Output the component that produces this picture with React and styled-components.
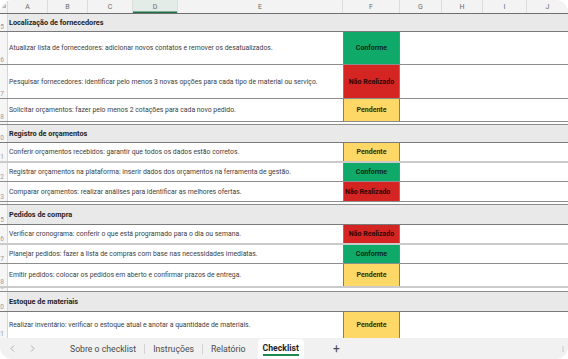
import React from "react";
import styled, { createGlobalStyle } from "styled-components";

const GlobalStyle = createGlobalStyle`
  html, body { margin: 0; padding: 0; background: #ffffff; }
  * { box-sizing: border-box; }
`;

const Frame = styled.div`
  width: 568px;
  height: 359px;
  border-radius: 12px;
  overflow: hidden;
  display: flex;
  flex-direction: column;
  background: #ffffff;
  font-family: Roboto, "Liberation Sans", sans-serif;
`;

const Sheet = styled.div`
  flex: 1;
  display: flex;
  flex-direction: column;
  overflow: hidden;
`;

const HeaderRow = styled.div`
  display: grid;
  grid-template-columns: 8px 40px 40px 45px 45px 165px 57px 42px 41px 44px 1fr;
  height: 14px;
  flex: none;
  background: #f3f3f3;
  border-bottom: 1px solid #6f6f6f;
`;

const Corner = styled.div`
  position: relative;
  border-right: 1px solid #dadada;
`;

const CornerMark = styled.svg`
  position: absolute;
  left: 2px;
  top: 4px;
`;

const ColHead = styled.div`
  display: flex;
  align-items: center;
  justify-content: center;
  font-size: 7px;
  color: #6a6a6a;
  border-right: 1px solid #dcdcdc;
  background: ${(p) => (p.$selected ? "#e3ece6" : "transparent")};
  box-shadow: ${(p) => (p.$selected ? "inset 0 -1.5px 0 #1e7145" : "none")};
  &:last-child { border-right: none; }
`;

const lineStyles = {
  dark: "1px solid #8d8d8d",
  light: "2px solid #cacaca",
  section: "1px solid #7a7a7a",
  none: "none",
};

const Row = styled.div`
  display: grid;
  grid-template-columns: 8px 335px 57px 1fr;
  height: ${(p) => p.$h}px;
  flex: none;
  border-bottom: ${(p) => lineStyles[p.$line || "dark"]};
  background: ${(p) => (p.$section ? "#e9e9e9" : "#ffffff")};
`;

const Spacer = styled.div`
  height: ${(p) => p.$h}px;
  flex: none;
  border-bottom: 1px solid #8d8d8d;
  background: #ffffff;
  display: grid;
  grid-template-columns: 8px 1fr;
  overflow: hidden;
`;

const RowNum = styled.div`
  display: flex;
  align-items: flex-end;
  justify-content: flex-end;
  padding-right: 3px;
  padding-bottom: 1px;
  overflow: hidden;
  font-size: 6.5px;
  line-height: 1;
  color: #9a9a9a;
  background: #f6f6f6;
  border-right: 1px solid #d6d6d6;
  white-space: nowrap;
`;

const TaskText = styled.div`
  display: flex;
  align-items: center;
  padding-left: 1px;
  font-size: 6.85px;
  color: #3c3c3c;
  white-space: nowrap;
  overflow: visible;
`;

const SectionTitle = styled.div`
  grid-column: 2 / -1;
  display: flex;
  align-items: center;
  padding-left: 1px;
  font-size: 7.3px;
  font-weight: 700;
  color: #1d1d1d;
  white-space: nowrap;
`;

const statusColors = {
  ok: { bg: "#0fa96a", fg: "#082a18", label: "Conforme" },
  no: { bg: "#d52523", fg: "#2c0505", label: "Não Realizado" },
  wait: { bg: "#fdd866", fg: "#3a2c00", label: "Pendente" },
};

const Status = styled.div`
  display: flex;
  align-items: center;
  justify-content: ${(p) => (p.$left ? "flex-start" : "center")};
  padding-left: ${(p) => (p.$left ? "1px" : "0")};
  font-size: 7px;
  font-weight: 700;
  white-space: nowrap;
  background: ${(p) => statusColors[p.$kind].bg};
  color: ${(p) => statusColors[p.$kind].fg};
  border-left: 1px solid #7d7d7d;
  border-right: 1px solid #7d7d7d;
`;

const Empty = styled.div``;

const TabBar = styled.div`
  height: 21px;
  flex: none;
  display: flex;
  align-items: stretch;
  background: #f1f1f1;
  font-family: Roboto, "Liberation Sans", sans-serif;
  position: relative;
`;

const NavArrows = styled.div`
  width: 62px;
  display: flex;
  align-items: center;
  gap: 15px;
  padding-left: 10px;
`;

const Tab = styled.div`
  display: flex;
  align-items: center;
  padding: 0 ${(p) => p.$pad || 8}px;
  margin-left: ${(p) => p.$gap || 0}px;
  font-size: 8.7px;
  color: ${(p) => (p.$active ? "#1f1f1f" : "#4a4a4a")};
  font-weight: ${(p) => (p.$active ? 700 : 400)};
  background: ${(p) => (p.$active ? "#ffffff" : "transparent")};
  border-radius: ${(p) => (p.$active ? "4px 4px 0 0" : "0")};
  margin-top: ${(p) => (p.$active ? "1px" : "0")};
  position: relative;
  white-space: nowrap;
`;

const TabLabel = styled.span`
  position: relative;
  padding-bottom: 1px;
  border-bottom: ${(p) => (p.$active ? "2px solid #1e8a4c" : "2px solid transparent")};
`;

const TabSep = styled.div`
  width: 1px;
  align-self: center;
  height: 10px;
  background: #d2d2d2;
`;

const AddTab = styled.div`
  display: flex;
  align-items: center;
  padding-left: 29px;
  font-size: 12px;
  color: #4a4a4a;
`;

const Grip = styled.svg`
  position: absolute;
  right: 4px;
  top: 8px;
`;

const rowsData = [
  { type: "section", n: 5, h: 18, title: "Localização de fornecedores", line: "section" },
  { n: 6, h: 33, text: "Atualizar lista de fornecedores: adicionar novos contatos e remover os desatualizados.", status: "ok" },
  { n: 7, h: 34, text: "Pesquisar fornecedores: identificar pelo menos 3 novas opções para cada tipo de material ou serviço.", status: "no" },
  { n: 8, h: 23, text: "Solicitar orçamentos: fazer pelo menos 2 cotações para cada novo pedido.", status: "wait" },
  { type: "spacer", n: 9, h: 3 },
  { type: "section", n: 10, h: 18, title: "Registro de orçamentos", line: "section" },
  { n: 11, h: 20, text: "Conferir orçamentos recebidos: garantir que todos os dados estão corretos.", status: "wait", line: "light" },
  { n: 12, h: 19, text: "Registrar orçamentos na plataforma: inserir dados dos orçamentos na ferramenta de gestão.", status: "ok" },
  { n: 13, h: 20, text: "Comparar orçamentos: realizar análises para identificar as melhores ofertas.", status: "no", left: true },
  { type: "spacer", n: 14, h: 3 },
  { type: "section", n: 15, h: 20, title: "Pedidos de compra", line: "section" },
  { n: 16, h: 20, text: "Verificar cronograma: conferir o que está programado para o dia ou semana.", status: "no", line: "light" },
  { n: 17, h: 19, text: "Planejar pedidos: fazer a lista de compras com base nas necessidades imediatas.", status: "ok" },
  { n: 18, h: 24, text: "Emitir pedidos: colocar os pedidos em aberto e confirmar prazos de entrega.", status: "wait", line: "light" },
  { type: "spacer", n: 19, h: 4 },
  { type: "section", n: 20, h: 20, title: "Estoque de materiais", line: "section" },
  { n: 21, h: 26, text: "Realizar inventário: verificar o estoque atual e anotar a quantidade de materiais.", status: "wait", line: "none" },
];

const columns = ["A", "B", "C", "D", "E", "F", "G", "H", "I", "J"];

const Chevron = ({ dir }) => (
  <svg width="5" height="7" viewBox="0 0 5 7">
    <path
      d={dir === "left" ? "M4 0.5 L1 3.5 L4 6.5" : "M1 0.5 L4 3.5 L1 6.5"}
      fill="none"
      stroke="#a8a8a8"
      strokeWidth="0.9"
    />
  </svg>
);

export default function App() {
  return (
    <>
      <GlobalStyle />
      <Frame>
        <Sheet>
          <HeaderRow>
            <Corner>
              <CornerMark width="4" height="4" viewBox="0 0 4 4">
                <path d="M4 0 L4 4 L0 4 Z" fill="#b5b5b5" />
              </CornerMark>
            </Corner>
            {columns.map((c) => (
              <ColHead key={c} $selected={c === "D"}>
                {c}
              </ColHead>
            ))}
          </HeaderRow>
          {rowsData.map((r) => {
            if (r.type === "spacer") {
              return (
                <Spacer key={r.n} $h={r.h}>
                  <RowNum>{r.n}</RowNum>
                  <Empty />
                </Spacer>
              );
            }
            if (r.type === "section") {
              return (
                <Row key={r.n} $h={r.h} $section $line={r.line}>
                  <RowNum>{r.n}</RowNum>
                  <SectionTitle>{r.title}</SectionTitle>
                </Row>
              );
            }
            return (
              <Row key={r.n} $h={r.h} $line={r.line}>
                <RowNum>{r.n}</RowNum>
                <TaskText>{r.text}</TaskText>
                <Status $kind={r.status} $left={r.left}>
                  {statusColors[r.status].label}
                </Status>
                <Empty />
              </Row>
            );
          })}
        </Sheet>
        <TabBar>
          <NavArrows>
            <Chevron dir="left" />
            <Chevron dir="right" />
          </NavArrows>
          <Tab>Sobre o checklist</Tab>
          <TabSep />
          <Tab>Instruções</Tab>
          <TabSep />
          <Tab>Relatório</Tab>
          <Tab $active $pad={5} $gap={4}>
            <TabLabel $active>Checklist</TabLabel>
          </Tab>
          <AddTab>+</AddTab>
          <Grip width="2" height="6" viewBox="0 0 2 6">
            <circle cx="1" cy="1" r="0.6" fill="#9a9a9a" />
            <circle cx="1" cy="3" r="0.6" fill="#9a9a9a" />
            <circle cx="1" cy="5" r="0.6" fill="#9a9a9a" />
          </Grip>
        </TabBar>
      </Frame>
    </>
  );
}
